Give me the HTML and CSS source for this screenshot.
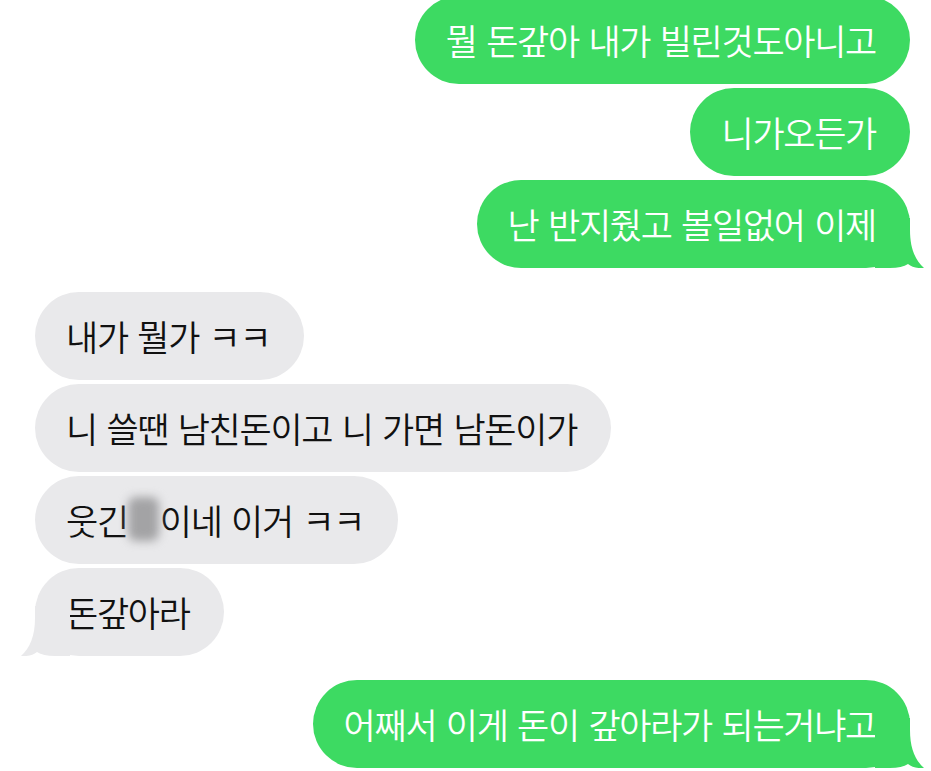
FILE: index.html
```html
<!DOCTYPE html>
<html>

<head lang="ko">
    <meta charset="UTF-8">
    <title>메시지</title>
    <link rel="stylesheet" href="styles.css">
</head>

<body>
    <div class="thread">
        <!-- 보낸 메시지 -->
        <div class="group sent">
            <div class="bubble">뭘 돈갚아 내가 빌린것도아니고</div>
            <div class="bubble">니가오든가</div>
            <div class="bubble has-tail">난 반지줬고 볼일없어 이제
                <svg class="tail" viewBox="0 0 50 50" width="50" height="50"><path d="M0 0 H35 V12 C35 30 40 42 49 50 C42 50.6 37 49 33 46 C29 48.8 23 50 15 50 H0 Z"/></svg>
            </div>
        </div>

        <!-- 받은 메시지 -->
        <div class="group received">
            <div class="bubble">내가 뭘가 ㅋㅋ</div>
            <div class="bubble">니 쓸땐 남친돈이고 니 가면 남돈이가</div>
            <div class="bubble">웃긴<span class="blur"></span>이네 이거 ㅋㅋ</div>
            <div class="bubble has-tail">돈갚아라
                <svg class="tail" viewBox="0 0 50 50" width="50" height="50"><path d="M0 0 H35 V12 C35 30 40 42 49 50 C42 50.6 37 49 33 46 C29 48.8 23 50 15 50 H0 Z"/></svg>
            </div>
        </div>

        <div class="group sent">
            <div class="bubble has-tail">어째서 이게 돈이 갚아라가 되는거냐고
                <svg class="tail" viewBox="0 0 50 50" width="50" height="50"><path d="M0 0 H35 V12 C35 30 40 42 49 50 C42 50.6 37 49 33 46 C29 48.8 23 50 15 50 H0 Z"/></svg>
            </div>
        </div>
    </div>
</body>

</html>
```

FILE: styles.css
```css
body {
    margin: 0px;
    padding: 0px;
    background: #ffffff;
    overflow: hidden;
    font-family: "Noto Sans CJK KR", sans-serif;
}

.thread {
    display: flex;
    flex-direction: column;
    gap: 24px;
    margin-top: -4px;
}

.group {
    display: flex;
    flex-direction: column;
    gap: 4px;
}

.sent {
    align-items: flex-end;
    padding-right: 21px;
}

.received {
    align-items: flex-start;
    padding-left: 35px;
}

.bubble {
    position: relative;
    display: flex;
    align-items: center;
    height: 88px;
    box-sizing: border-box;
    padding: 0px 34px 2px 31px;
    border-radius: 44px;
    font-size: 35px;
    font-weight: 350;
    letter-spacing: -1.3px;
    word-spacing: 3px;
    white-space: nowrap;
}

.sent .bubble {
    background: #3dda62;
    color: #ffffff;
}

.received .bubble {
    background: #e9e9eb;
    color: #111111;
}

.tail {
    position: absolute;
    bottom: 0px;
    right: -15px;
}

.sent .tail {
    fill: #3dda62;
}

.received .tail {
    fill: #e9e9eb;
    right: auto;
    left: -15px;
    transform: scaleX(-1);
}

.blur {
    display: inline-block;
    width: 31px;
    height: 44px;
    margin: 0px 1px 0px 0px;
    background: #a3a3a5;
    border-radius: 8px;
    filter: blur(5px);
}
```
